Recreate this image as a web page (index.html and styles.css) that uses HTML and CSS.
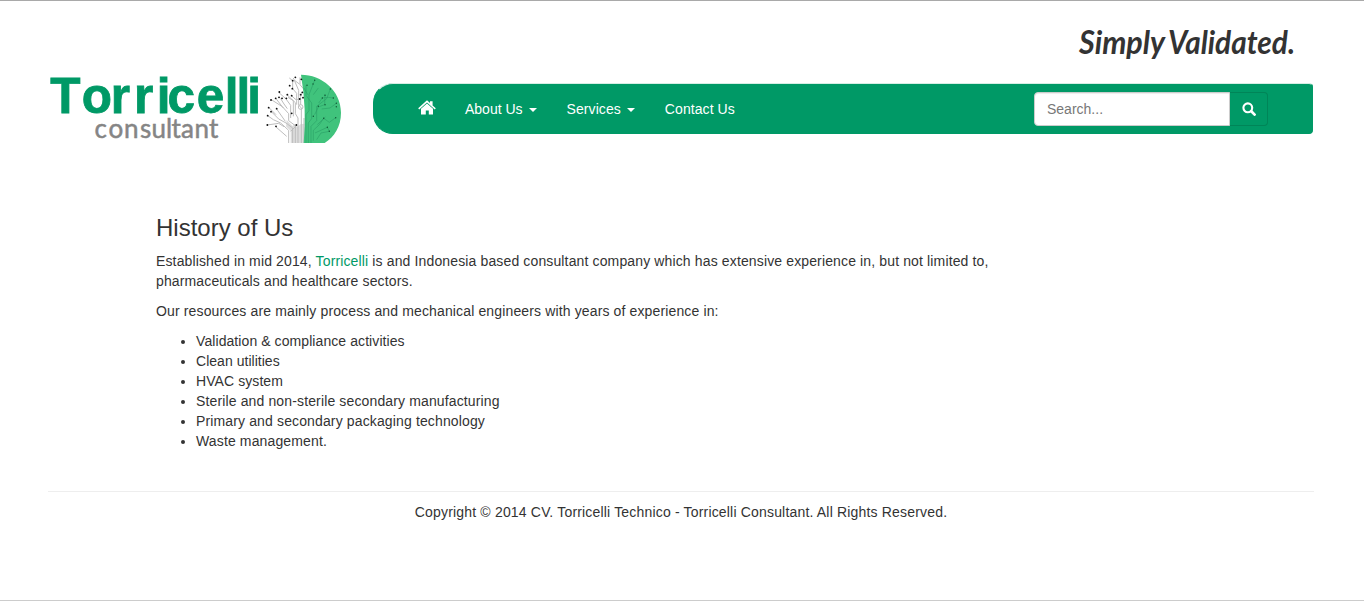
FILE: index.html
```html
<!DOCTYPE html>
<html lang="en">
<head>
<meta charset="utf-8">
<title>Torricelli Consultant</title>
<link rel="stylesheet" href="styles.css">
</head>
<body>
<div class="page">
  <header class="header">
    <div class="tagline">
      <svg width="230" height="50" viewBox="1076 22 230 50" role="img">
        <text class="script" x="1079" y="54" textLength="86" lengthAdjust="spacingAndGlyphs">Simply</text>
        <text class="script" x="1168" y="54" textLength="127" lengthAdjust="spacingAndGlyphs">Validated.</text>
      </svg>
    </div>
    <div class="masthead">
      <a class="brand" href="#">
        <svg width="300" height="80" viewBox="48 68 300 80">
          <text class="brand-name" y="112.6" x="50.3 81.7 110.7 134 156.8 167.5 196.7 224.7 236.5 247.2">Torricelli</text>
          <text class="brand-sub" y="138" x="94.5 108.5 124 140 151.5 166 171.5 181 194.5 209">consultant</text>
          <g transform="translate(260 68) scale(.33333)">
            <g class="branches">
              <path d="M106 225V173L86 158V137L67 116L34 95M98 225V180L78 165L56 153L34 131M114 225V150L106 137V104L80 79M124 225V120L116 111V67L100 30M86 225V187L62 165L40 155L23 143M80 205L48 177M76 160L50 123M92 150V112L78 93L56 73M100 145V98L84 88M132 225V150M70 120L48 92M22 171L56 166L72 176M26 118L48 140M122 110V85L127 72M118 48L105 38M130 62L120 50V28M62 92L72 108L82 122M92 190L110 172M94 83L108 95L120 93M88 30L98 38V62L110 76V110"/>
              <circle cx="122" cy="117" r="7"/>
            </g>
            <path class="trunk" d="M80 156l17 18 7-5 8 8 9-8 13-2v58H92v-36l-14-14Z"/>
            <path class="crown" d="M123 20C185 20 243 67 243 134C243 175 223 207 194 225H131Q141 125 123 20Z"/>
            <g class="veins">
              <path d="M145 225V165L155 152V105L138 82V52M153 225V175L170 158V115L200 92L211 63M138 225V140L147 128V80L164 37M160 218V187L178 170L191 151L208 163L227 149M165 195L202 178L208 190M172 170L196 147M185 123L210 120L229 106M176 105L187 90L205 88L220 90M160 80L175 60M143 80L132 60M170 215L183 195L208 190M164 140L175 117L194 110L195 79"/>
            </g>
            <path class="nodes" d="M106 28h.1M98 38h.1M124 34h.1M89 53h.1M97 62h.1M58 72h.1M82 80h.1M95 83h.1M127 73h.1M47 91h.1M57 88h.1M33 96h.1M66 91h.1M79 91h.1M122 80h.1M129 89h.1M119 93h.1M26 119h.1M50 122h.1M33 131h.1M23 143h.1M95 136h.1M22 171h.1M48 175h.1M109 171h.1"/>
            <path class="nodes nodes-right" d="M164 37h.1M141 52h.1M159 48h.1M211 63h.1M187 90h.1M195 82h.1M220 90h.1M229 106h.1M229 116h.1M195 110h.1M175 115h.1M160 145h.1M191 151h.1M227 149h.1M202 178h.1M208 190h.1"/>
          </g>
        </svg>
      </a>
      <nav class="navbar">
        <a class="nav-link nav-home" href="#" aria-label="Home">
          <svg width="18" height="16" viewBox="0 0 18 16"><path class="fill-white" d="M9 .3L12 3V1.2h2.6v4.2L17.8 8.3L16.8 9.4L9 2.5L1.2 9.4L.2 8.3ZM9 3.5L15 8.8V14.5H10.8V10.5H7.8V14.5H3V8.8Z"/></svg>
        </a>
        <a class="nav-link" href="#">About Us <b class="caret"></b></a>
        <a class="nav-link nav-services" href="#">Services <b class="caret"></b></a>
        <a class="nav-link nav-contact" href="#">Contact Us</a>
        <form class="search">
          <input class="search-input" type="text" placeholder="Search...">
          <button class="search-button" type="button" aria-label="Search">
            <svg width="14" height="14" viewBox="0 0 14 14"><circle class="lens" cx="5.8" cy="5.8" r="4.4"/><path class="lens handle" d="M9.3 9.3L12.6 12.6"/></svg>
          </button>
        </form>
      </nav>
    </div>
  </header>
  <main class="content">
    <h3>History of Us</h3>
    <p>Established in mid 2014, <a href="#">Torricelli</a> is and Indonesia based consultant company which has extensive experience in, but not limited to, pharmaceuticals and healthcare sectors.</p>
    <p>Our resources are mainly process and mechanical engineers with years of experience in:</p>
    <ul>
      <li class="snug">Validation &amp; compliance activities</li>
      <li class="tight">Clean utilities</li>
      <li class="snug">HVAC system</li>
      <li>Sterile and non-sterile secondary manufacturing</li>
      <li>Primary and secondary packaging technology</li>
      <li>Waste management.</li>
    </ul>
  </main>
  <footer class="footer">Copyright © 2014 CV. Torricelli Technico - Torricelli Consultant. All Rights Reserved.</footer>
</div>
</body>
</html>
```
FILE: styles.css
```css
* { box-sizing: border-box; }
body {
  margin: 0;
  color: #333;
  background: #fff;
  font: 14px/20px "Liberation Sans", Arial, sans-serif;
}
.page {
  height: 601px;
  padding: 0 50px 0 48px;
  border-top: 1px solid #a9a9a9;
  border-bottom: 1px solid #ccc;
  overflow: hidden;
}
.header { padding: 21px 1px 0 0; }
.tagline {
  display: flex;
  justify-content: flex-end;
  height: 46px;
  padding-right: 7px;
}
.tagline svg { flex: none; overflow: visible; }
.script {
  font: italic 700 32px Lato, sans-serif;
  fill: #333;
}
.masthead { display: flex; align-items: flex-start; height: 80px; }
.brand { display: block; width: 325px; height: 80px; }
.brand svg { display: block; }
.brand-name { font: 700 49.5px "Liberation Sans", Arial, sans-serif; fill: #009966; stroke: #009966; stroke-width: .8; }
.brand-sub { font: 400 26px Lato, sans-serif; fill: #858585; stroke: #858585; stroke-width: .5; }
.branches { fill: none; stroke: #bdbdbd; stroke-width: 3; }
.trunk { fill: #bbb; opacity: .5; }
.crown { fill: #40c37c; }
.veins { fill: none; stroke: #279c63; stroke-width: 2.6; opacity: .65; }
.nodes { fill: none; stroke: #111; stroke-width: 5.5; stroke-linecap: round; }
.nodes-right { stroke: #125c38; stroke-width: 4.5; }
.navbar {
  display: flex;
  flex: 1;
  align-items: center;
  height: 51px;
  margin-top: 15px;
  padding: 0 44px 0 30px;
  border: 1px solid #009966;
  border-top-color: #d6eee5;
  border-radius: 20px 4px 4px 20px;
  background: #009966;
}
.nav-link {
  display: flex;
  align-items: center;
  padding: 0 15px;
  color: #fff;
  text-decoration: none;
}
.nav-home { width: 46px; padding-left: 14px; }
.nav-home svg { flex: none; margin-top: -2px; }
.nav-services { letter-spacing: .07px; }
.nav-contact { letter-spacing: .08px; }
.fill-white { fill: #fff; }
.caret {
  margin-left: 6px;
  margin-top: 2px;
  border: 4px solid transparent;
  border-top-color: #fff;
  border-bottom: 0;
}
.search { display: flex; margin: 0 0 0 auto; }
.search-input {
  width: 196px;
  height: 34px;
  padding: 6px 12px;
  border: 1px solid #ccc;
  border-radius: 4px 0 0 4px;
  font: inherit;
  box-shadow: inset 0 1px 1px rgba(0, 0, 0, .075);
}
.search-input::placeholder { color: #777; opacity: 1; }
.search-button {
  display: flex;
  align-items: center;
  justify-content: center;
  width: 38px;
  height: 34px;
  padding: 0;
  border: 1px solid #008558;
  border-left: 0;
  border-radius: 0 4px 4px 0;
  background: #009966;
}
.lens { fill: none; stroke: #fff; stroke-width: 2.1; }
.handle { stroke-width: 2.7; stroke-linecap: round; }
.content { width: 844px; margin: 66px 0 0 108px; letter-spacing: .136px; }
h3 { margin: 0 0 10px; font-size: 24px; font-weight: 400; line-height: 27px; letter-spacing: 0; }
p { margin: 0 0 10px; }
.content a { color: #009966; text-decoration: none; }
ul { margin: 0; padding-left: 40px; }
.snug { letter-spacing: .08px; }
.tight { letter-spacing: .03px; }
.footer {
  margin-top: 40px;
  padding-top: 10px;
  border-top: 1px solid #eee;
  text-align: center;
  letter-spacing: .178px;
}
```
